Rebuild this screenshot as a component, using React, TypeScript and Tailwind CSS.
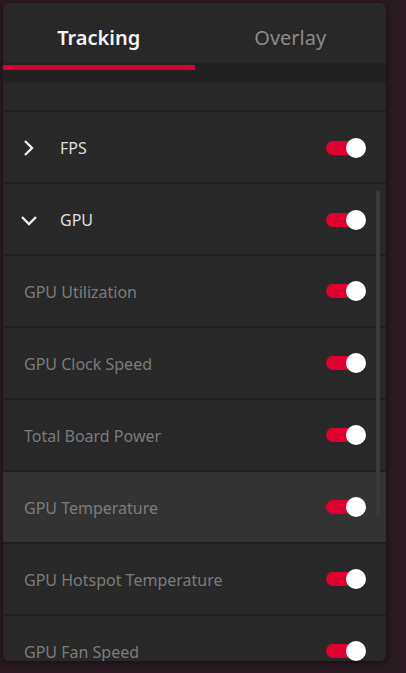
const subItems = [
  { label: "GPU Utilization" },
  { label: "GPU Clock Speed" },
  { label: "Total Board Power" },
  { label: "GPU Temperature", active: true },
  { label: "GPU Hotspot Temperature" },
  { label: "GPU Fan Speed" },
];

function Toggle() {
  return (
    <div className="relative h-5 w-10 shrink-0">
      <div className="absolute left-0 top-[3px] h-[14px] w-[34px] rounded-full bg-[#df0032]" />
      <div className="absolute right-0 top-0 h-5 w-5 rounded-full bg-white" />
    </div>
  );
}

function Chevron({ open }: { open: boolean }) {
  return (
    <svg width="18" height="18" viewBox="0 0 18 18" className="shrink-0">
      {open ? (
        <polyline points="2,6 9,13 16,6" fill="none" stroke="#f0f0f0" strokeWidth="2.3" />
      ) : (
        <polyline points="5,2 12,9 5,16" fill="none" stroke="#f0f0f0" strokeWidth="2.3" />
      )}
    </svg>
  );
}

export default function App() {
  return (
    <div
      className="h-[673px] w-full bg-[#2a1a22] pl-[3px] pr-[20px] pt-[3px]"
      style={{ fontFamily: '"Noto Sans", "Open Sans", sans-serif' }}
    >
      <div className="flex h-[658px] flex-col overflow-hidden rounded-[6px] bg-[#282828] shadow-[0_2px_6px_rgba(0,0,0,0.45)]">
        {/* Tabs */}
        <div className="grid h-[60px] shrink-0 grid-cols-2 pt-[10px]">
          <div className="flex items-center justify-center text-[20px] font-semibold text-[#f4f4f4]">
            Tracking
          </div>
          <div className="flex items-center justify-center text-[20px] text-[#8a8a8a]">
            Overlay
          </div>
        </div>
        <div className="h-[20px] shrink-0 bg-[#212121] pt-[2px]">
          <div className="h-[5px] w-1/2 bg-[#df0032]" />
        </div>

        {/* List */}
        <div className="relative flex-1 overflow-hidden">
          <div className="h-[27px]" />

          <div className="flex h-[72px] items-center border-t-2 border-[#1f1f1f] pl-[17px] pr-[20px] pt-[2px]">
            <Chevron open={false} />
            <span className="ml-[22px] flex-1 text-[16px] text-[#dedede]">FPS</span>
            <Toggle />
          </div>

          <div className="flex h-[72px] items-center border-t-2 border-[#1f1f1f] pl-[17px] pr-[20px] pt-[2px]">
            <Chevron open />
            <span className="ml-[22px] flex-1 text-[16px] text-[#dedede]">GPU</span>
            <Toggle />
          </div>

          {subItems.map((item) => (
            <div
              key={item.label}
              className={`flex h-[72px] items-center border-t-2 border-[#1f1f1f] pl-[21px] pr-[20px] ${
                item.active ? "bg-[#333333]" : ""
              }`}
            >
              <span className="flex-1 pt-[2px] text-[16px] text-[#7b7b7b]">{item.label}</span>
              <Toggle />
            </div>
          ))}

          {/* Scrollbar */}
          <div className="absolute right-[6px] top-[107px] h-[327px] w-[4px] rounded-full bg-[#3a3a3a]" />
        </div>
      </div>
    </div>
  );
}
